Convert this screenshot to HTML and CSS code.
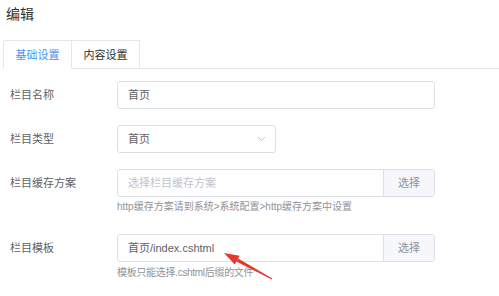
FILE: index.html
```html
<!DOCTYPE html>
<html lang="zh-CN">
<head>
<meta charset="utf-8">
<title>编辑</title>
<link rel="stylesheet" href="styles.css">
</head>
<body>
<div class="page">
  <h1 class="title">编辑</h1>
  <div class="tabs">
    <div class="tab active">基础设置</div>
    <div class="tab">内容设置</div>
    <div class="tab-rest"></div>
  </div>
  <div class="form">
    <div class="row">
      <div class="label">栏目名称</div>
      <div class="field">
        <div class="input wide">首页</div>
      </div>
    </div>
    <div class="row">
      <div class="label">栏目类型</div>
      <div class="field">
        <div class="input select">
          <span>首页</span>
          <svg class="chev" width="9" height="6" viewBox="0 0 9 6"><path d="M1 1 L4.5 4.5 L8 1" fill="none" stroke="#c0c4cc" stroke-width="1"/></svg>
        </div>
      </div>
    </div>
    <div class="row">
      <div class="label">栏目缓存方案</div>
      <div class="field">
        <div class="group wide">
          <div class="group-input placeholder">选择栏目缓存方案</div>
          <div class="group-btn">选择</div>
        </div>
        <div class="help">http缓存方案请到系统&gt;系统配置&gt;http缓存方案中设置</div>
      </div>
    </div>
    <div class="row">
      <div class="label">栏目模板</div>
      <div class="field">
        <div class="group wide">
          <div class="group-input">首页/index.cshtml</div>
          <div class="group-btn">选择</div>
        </div>
        <div class="help help2">模板只能选择.cshtml后缀的文件</div>
      </div>
    </div>
  </div>
  <svg class="arrow" width="499" height="296" viewBox="0 0 499 296">
    <polygon points="224,253 239.6,255.7 234.8,264.5" fill="#e8372c"/>
    <polygon points="238.2,258.6 236.3,261.6 271.8,279.5 272.3,278.6" fill="#e8372c"/>
  </svg>
</div>
</body>
</html>
```

FILE: styles.css
```css
html, body {
  margin: 0;
  padding: 0;
  background: #ffffff;
}
.page {
  position: relative;
  width: 499px;
  height: 296px;
  overflow: hidden;
  font-family: "Liberation Sans", "Noto Sans CJK SC", sans-serif;
  color: #606266;
}
.title {
  margin: 0;
  padding-left: 6px;
  font-size: 14px;
  font-weight: normal;
  line-height: 28px;
  height: 40px;
  color: #303133;
}
.tabs {
  display: flex;
  height: 29px;
  padding-left: 3px;
}
.tab {
  box-sizing: border-box;
  height: 29px;
  line-height: 29px;
  font-size: 11px;
  text-align: center;
  color: #303133;
  border-top: 1px solid #e4e7ed;
  border-right: 1px solid #e4e7ed;
  border-bottom: 1px solid #e4e7ed;
  width: 68px;
  background: #fff;
}
.tab.active {
  width: 69px;
  border-left: 1px solid #e4e7ed;
  border-bottom-color: #ffffff;
  color: #4a93f0;
  border-top-left-radius: 3px;
}
.tab-rest {
  flex: 1;
  border-bottom: 1px solid #e4e7ed;
}
.form {
  padding-left: 10px;
  padding-top: 12px;
}
.row {
  display: flex;
  margin-bottom: 16px;
}
.label {
  width: 107px;
  flex: none;
  font-size: 11px;
  line-height: 28px;
  color: #606266;
}
.field {
  display: flex;
  flex-direction: column;
}
.input {
  box-sizing: border-box;
  height: 28px;
  line-height: 26px;
  border: 1px solid #dcdfe6;
  border-radius: 3px;
  padding-left: 10px;
  font-size: 11px;
  color: #606266;
}
.wide {
  width: 318px;
}
.select {
  width: 159px;
  display: flex;
  align-items: center;
  justify-content: space-between;
  padding-right: 9px;
}
.chev {
  display: block;
}
.group {
  box-sizing: border-box;
  display: flex;
  height: 28px;
  border: 1px solid #dcdfe6;
  border-radius: 3px;
  overflow: hidden;
}
.group-input {
  flex: 1;
  line-height: 26px;
  padding-left: 10px;
  font-size: 11px;
  color: #606266;
}
.group-input.placeholder {
  color: #c0c4cc;
}
.group-btn {
  width: 50px;
  border-left: 1px solid #dcdfe6;
  background: #f5f7fa;
  text-align: center;
  line-height: 26px;
  font-size: 11px;
  color: #909399;
}
.help {
  font-size: 10px;
  line-height: 14px;
  margin-top: 3px;
  margin-bottom: 4px;
  color: #909399;
  white-space: nowrap;
}
.help2 {
  margin-top: 4px;
  letter-spacing: -0.3px;
}
.arrow {
  position: absolute;
  left: 0;
  top: 0;
  pointer-events: none;
}
```
